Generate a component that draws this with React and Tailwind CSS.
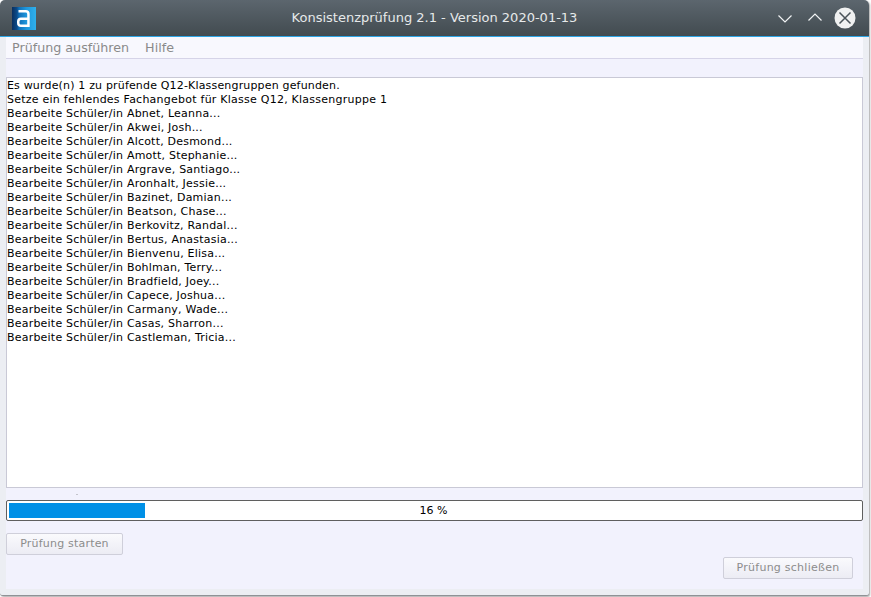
import React from "react";

const students = [
  "Abnet, Leanna",
  "Akwei, Josh",
  "Alcott, Desmond",
  "Amott, Stephanie",
  "Argrave, Santiago",
  "Aronhalt, Jessie",
  "Bazinet, Damian",
  "Beatson, Chase",
  "Berkovitz, Randal",
  "Bertus, Anastasia",
  "Bienvenu, Elisa",
  "Bohlman, Terry",
  "Bradfield, Joey",
  "Capece, Joshua",
  "Carmany, Wade",
  "Casas, Sharron",
  "Castleman, Tricia",
];

function Logo() {
  return (
    <svg width="24" height="23" viewBox="0 0 24 23">
      <defs>
        <linearGradient id="logoBg" x1="0" y1="0" x2="1" y2="0">
          <stop offset="0" stopColor="#0a2f5e" />
          <stop offset="0.2" stopColor="#0b4a88" />
          <stop offset="0.3" stopColor="#1170b8" />
          <stop offset="0.6" stopColor="#1f97dc" />
          <stop offset="1" stopColor="#2fb0ec" />
        </linearGradient>
      </defs>
      <rect width="24" height="23" fill="url(#logoBg)" />
      <path
        d="M6.500 3h7.200c2.600 0 4 1.500 4 4v13H9c-2.500 0-4-1.500-4-4v-1.500c0-2.500 1.500-4 4-4h6.200V7.200c0-1-.6-1.700-1.700-1.700H6.500zM15.200 13H9.200c-1 0-1.700.6-1.700 1.700V16c0 1 .7 1.500 1.700 1.500h6z"
        fill="#fff"
        fillRule="evenodd"
      />
    </svg>
  );
}

function WindowButtons() {
  return (
    <div className="flex items-center justify-end">
      <svg width="16" height="10" viewBox="0 0 16 10" className="mr-[14px] mt-[1px]">
        <path d="M1.500 1.500 8 8l6.500-6.500" fill="none" stroke="#f1f3f4" strokeWidth="1.2" />
      </svg>
      <svg width="16" height="10" viewBox="0 0 16 10" className="mr-[11px] mt-[-2px]">
        <path d="M1.500 8.500 8 2l6.500 6.500" fill="none" stroke="#f1f3f4" strokeWidth="1.2" />
      </svg>
      <svg width="22" height="22" viewBox="0 0 22 22">
        <circle cx="11" cy="11" r="10.500" fill="#f0f1f1" />
        <path d="M5.500 5.500l11 11M16.500 5.500l-11 11" stroke="#4a5359" strokeWidth="1.500" />
      </svg>
    </div>
  );
}

export default function App() {
  return (
    <div className="w-[871px] h-[597px] bg-white overflow-hidden font-['DejaVu_Sans',sans-serif]">
      <div className="w-[869px] h-[596px] flex flex-col rounded-t-[5px] rounded-b-[3px] overflow-hidden bg-[#eceef3] border-b border-[#8f9296] shadow-[1px_1px_2px_rgba(0,0,0,0.35)]">
        <div className="h-[37px] shrink-0 flex items-center pl-[12px] pr-[13px] bg-gradient-to-b from-[#5c666e] to-[#424b50] border-b border-[#2ea6e6]">
          <div className="w-[91px] shrink-0 flex">
            <Logo />
          </div>
          <div className="flex-1 text-center text-[13px] text-[#e6e9ea]">Konsistenzprüfung 2.1 - Version 2020-01-13</div>
          <div className="w-[90px] shrink-0">
            <WindowButtons />
          </div>
        </div>

        <div className="flex-1 mx-[6px] flex flex-col bg-[#f2f2fd] min-h-0 mb-[6px]">
          <div className="h-[22px] shrink-0 flex items-center gap-[16px] pl-[6px] text-[12.7px] text-[#8a8a8a] bg-[#f8f8fe] border-b border-[#d6d4e8]">
            <span>Prüfung ausführen</span>
            <span>Hilfe</span>
          </div>

          <div className="h-[411px] mt-[18px] shrink-0 bg-white border border-[#c9c9d6] pt-[1px] text-[11px] leading-[14px] tracking-[0.21px] text-black whitespace-pre">
            <div className="tracking-[0.17px]">Es wurde(n) 1 zu prüfende Q12-Klassengruppen gefunden.</div>
            <div className="tracking-[0.24px]">Setze ein fehlendes Fachangebot für Klasse Q12, Klassengruppe 1</div>
            {students.map((name) => (
              <div key={name}>Bearbeite Schüler/in {name}...</div>
            ))}
          </div>

          <div className="h-[12px] shrink-0 pl-[70px] pt-[6px]">
            <div className="w-[2px] h-[1px] bg-[#c4c4cc]" />
          </div>

          <div className="h-[21px] shrink-0 relative bg-white border border-[#5f5f5f] rounded-[2px] p-[2px]">
            <div className="h-full w-[136px] bg-[#0090e6]" />
            <div className="absolute inset-0 pt-[1px] pr-[2px] flex items-center justify-center text-[11px] text-black">16 %</div>
          </div>

          <div className="mt-[12px] flex flex-col">
            <button className="self-start w-[117px] h-[22px] rounded-[2px] border border-[#cfcfda] bg-gradient-to-b from-[#fafafd] to-[#ececf4] text-[11px] tracking-[0.2px] text-[#8c8c8c]">
              Prüfung starten
            </button>
            <button className="self-end mr-[10px] mt-[2px] w-[130px] h-[22px] rounded-[2px] border border-[#cfcfda] bg-gradient-to-b from-[#fafafd] to-[#ececf4] text-[11px] tracking-[0.25px] text-[#8c8c8c]">
              Prüfung schließen
            </button>
          </div>
        </div>
      </div>
    </div>
  );
}
